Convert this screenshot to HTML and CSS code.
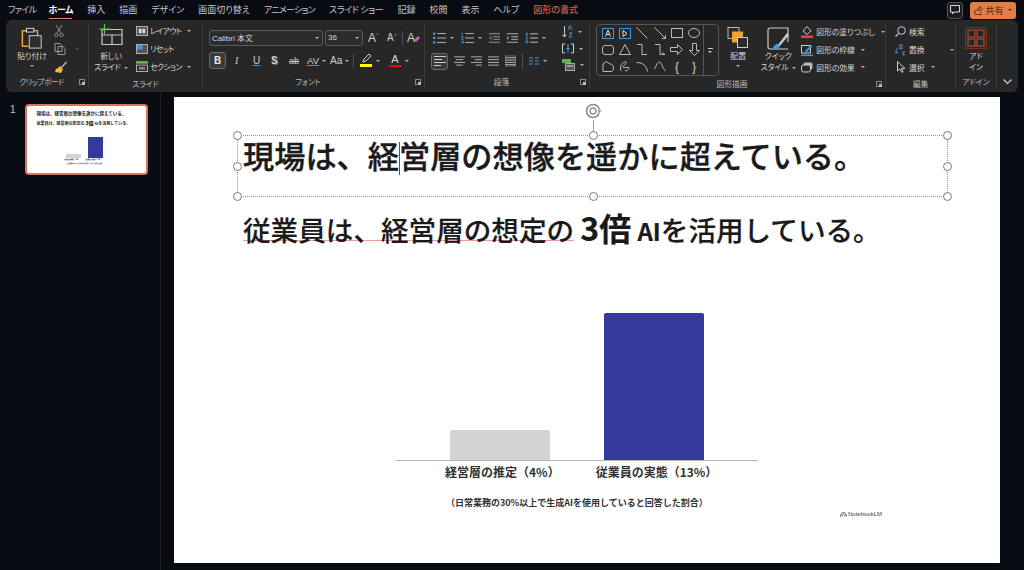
FILE: index.html
```html
<!DOCTYPE html>
<html lang="ja">
<head>
<meta charset="utf-8">
<title>PowerPoint</title>
<link rel="stylesheet" href="styles.css">
</head>
<body>
<div class="app">
  <header class="tabbar">
    <nav class="tabs">
      <span class="tab kana">ファイル</span><span class="tab active">ホーム</span><span class="tab">挿入</span><span class="tab">描画</span><span class="tab">デザイン</span><span class="tab">画面切り替え</span><span class="tab kana">アニメーション</span><span class="tab kana-soft">スライド ショー</span><span class="tab">記録</span><span class="tab">校閲</span><span class="tab">表示</span><span class="tab">ヘルプ</span><span class="tab context">図形の書式</span>
    </nav>
    <div class="tab-actions">
      <span class="comment-btn"><svg width="10" height="10" viewBox="0 0 10 10"><path d="M.5.5h9v6.500H4L2.500 9V7H.5z" fill="none" stroke="#ddd"/></svg></span>
      <span class="share-btn"><svg width="9" height="9" viewBox="0 0 9 9"><path d="M1 4v4.500h6V6M3 5c0-2 1-3 3-3V.5L8.500 3 6 5V3.800C4.500 3.800 3.500 4 3 5z" fill="none" stroke="#5a2a10" stroke-width=".9"/></svg>共有<i class="chev dark"></i></span>
    </div>
  </header>

  <section class="ribbon">
    <div class="group g-clip">
      <div class="body">
        <div class="big paste">
          <svg width="22" height="22" viewBox="0 0 24 24"><path d="M6 4H1.500v17H8" fill="none" stroke="#eea83c" stroke-width="1.600"/><path d="M14 4h4v5" fill="none" stroke="#eea83c" stroke-width="1.500"/><rect x="6" y="1.500" width="8" height="4" fill="none" stroke="#ddd"/><rect x="9" y="9.500" width="13" height="13.500" fill="#2d2d2d" stroke="#ddd"/></svg>
          <span>貼り付け</span><i class="chev"></i>
        </div>
        <div class="clip-tools">
          <svg width="10" height="12" viewBox="0 0 10 12"><path d="M2 0l5 8M8 0L3 8" stroke="#888" fill="none"/><circle cx="2.500" cy="10" r="1.700" fill="none" stroke="#888"/><circle cx="7.500" cy="10" r="1.700" fill="none" stroke="#888"/></svg>
          <span class="copy-row"><svg width="13" height="12" viewBox="0 0 13 12"><path d="M1 .5h5l2 2v6H1z M4 3.500h5l2 2v6H4z" fill="#262626" stroke="#999"/></svg><i class="chev dim"></i></span>
          <svg width="13" height="13" viewBox="0 0 13 13"><path d="M7 6l5-5.500 1 1L8 7z" fill="#bbb"/><path d="M6 5l3 3-2 4-6-1 1-3 2-1z" fill="#f0ba3e"/></svg>
        </div>
      </div>
      <div class="label with-launcher tight">クリップボード<i class="launcher"></i></div>
    </div>

    <div class="group g-slide">
      <div class="body">
        <div class="big">
          <svg width="24" height="21" viewBox="0 0 24 21"><path d="M3 5.500h20v15H3zM3 11h20M13 11v9.500" fill="none" stroke="#c8c8c8" stroke-width="1.200"/><path d="M5.500 0v10M0 5h11" stroke="#62c552" stroke-width="1.200"/></svg>
          <span>新しい</span><span>スライド<i class="chev"></i></span>
        </div>
        <div class="stack">
          <div class="row"><svg width="12" height="10" viewBox="0 0 13 11"><rect x=".5" y=".5" width="12" height="10" fill="#555" stroke="#bbb"/><path d="M3 3h3v5H3zM7 3h3v5H7z" fill="#ddd"/></svg>レイアウト<i class="chev"></i></div>
          <div class="row"><svg width="12" height="10" viewBox="0 0 13 11"><rect x=".5" y=".5" width="12" height="10" fill="#555" stroke="#bbb"/><path d="M1 1h6v5H1z" fill="#3b9ae1"/></svg>リセット</div>
          <div class="row"><svg width="12" height="11" viewBox="0 0 13 12"><rect x="0" y="0" width="13" height="3" fill="#62b04f"/><rect x=".5" y="4.500" width="12" height="7" fill="none" stroke="#bbb"/><rect x="3" y="6.500" width="7" height="3" fill="#888"/></svg>セクション<i class="chev"></i></div>
        </div>
      </div>
      <div class="label">スライド</div>
    </div>

    <div class="group g-font">
      <div class="body column">
        <div class="font-row">
          <span class="select font-name">Calibri 本文<i class="chev"></i></span>
          <span class="select font-size">36<i class="chev"></i></span>
          <span class="glyph big-a">A<sup>^</sup></span>
          <span class="glyph small-a">A<sup>˅</sup></span>
          <span class="vline"></span>
          <span class="glyph clear-a">A<svg width="8" height="8" viewBox="0 0 8 8"><path d="M1 5l4-4 2 2-4 4z" fill="#d060b0"/></svg></span>
        </div>
        <div class="font-row second">
          <span class="toggle b">B</span>
          <span class="glyph italic">I</span>
          <span class="glyph under">U</span>
          <span class="glyph shadow">S</span>
          <span class="glyph strike">ab</span>
          <span class="glyph spacing">AV<i class="chev"></i></span>
          <span class="glyph case">Aa<i class="chev"></i></span>
          <span class="vline"></span>
          <span class="color-btn"><svg width="13" height="9" viewBox="0 0 13 9"><path d="M3 8l1-3 5-5 2 2-5 5z" fill="none" stroke="#ccc"/></svg><b class="bar yellow"></b></span><i class="chev"></i>
          <span class="color-btn letter">A<b class="bar red"></b></span><i class="chev"></i>
        </div>
      </div>
      <div class="label with-launcher">フォント<i class="launcher"></i></div>
    </div>

    <div class="group g-para">
      <div class="body">
        <div class="para-main">
          <div class="para-row">
            <span class="ico"><svg width="13" height="12" viewBox="0 0 14 12"><path d="M0 0h2.500v2.500H0zM0 4.700h2.500v2.500H0zM0 9.500h2.500V12H0z" fill="#3b9ae1"/><path d="M4.500 1.200H14M4.500 6H14M4.500 10.800H14" stroke="#bbb"/></svg><i class="chev"></i></span>
            <span class="ico"><svg width="13" height="12" viewBox="0 0 14 12"><path d="M1 0v3M.5 4.500h2L.5 7.500h2M.5 9.500h2v2h-2" fill="none" stroke="#3b9ae1"/><path d="M4.500 1.200H14M4.500 6H14M4.500 10.800H14" stroke="#bbb"/></svg><i class="chev"></i></span>
            <span class="ico"><svg width="11" height="12" viewBox="0 0 13 12"><path d="M0 1h13M5 4.500h8M5 7.500h8M0 11h13" stroke="#aaa"/><path d="M3 3.500L0 6l3 2.500z" fill="#777"/></svg></span>
            <span class="ico"><svg width="11" height="12" viewBox="0 0 13 12"><path d="M0 1h13M5 4.500h8M5 7.500h8M0 11h13" stroke="#ccc"/><path d="M0 3.500L3 6 0 8.500z" fill="#3b9ae1"/></svg></span>
            <span class="ico"><svg width="13" height="12" viewBox="0 0 14 12"><path d="M2 1v10M.5 2.500L2 .5l1.500 2M.5 9.500L2 11.500l1.500-2" fill="none" stroke="#3b9ae1"/><path d="M5.500 1.500H14M5.500 6H14M5.500 10.500H14" stroke="#ccc"/></svg><i class="chev"></i></span>
          </div>
          <div class="para-row second">
            <span class="toggle align"><svg width="12" height="10" viewBox="0 0 12 10"><path d="M0 .5h12M0 3.500h8M0 6.500h12M0 9.500h7" stroke="#ccc"/></svg></span>
            <span class="ico"><svg width="11" height="10" viewBox="0 0 12 10"><path d="M0 .5h12M2 3.500h8M0 6.500h12M2.500 9.500h7" stroke="#bbb"/></svg></span>
            <span class="ico"><svg width="11" height="10" viewBox="0 0 12 10"><path d="M0 .5h12M4 3.500h8M0 6.500h12M5 9.500h7" stroke="#bbb"/></svg></span>
            <span class="ico"><svg width="11" height="10" viewBox="0 0 12 10"><path d="M0 .5h12M0 3.500h12M0 6.500h12M0 9.500h12" stroke="#bbb"/></svg></span>
            <span class="ico"><svg width="11" height="12" viewBox="0 0 12 12"><path d="M0 2.500h12M0 5h12M0 7.500h12M0 10h12" stroke="#ccc"/><path d="M.5 0v12M11.500 0v12M0 .5h12M0 11.500h12" stroke="#3b9ae1" stroke-width=".8"/></svg></span>
            <span class="vline"></span>
            <span class="ico"><svg width="10" height="8" viewBox="0 0 10 8"><path d="M0 1h4M0 4h4M0 7h4M6 1h4M6 4h4M6 7h4" stroke="#3b9ae1"/></svg><i class="chev"></i></span>
          </div>
        </div>
        <div class="para-side">
          <span class="ico"><svg width="11" height="13" viewBox="0 0 11 13"><path d="M2.500 1v11M.5 9.500l2 2.500 2-2.500" fill="none" stroke="#ccc"/><path d="M7 5V1h1.500L10 5M7 8h3l-3 4h3" fill="none" stroke="#3b9ae1"/></svg><i class="chev"></i></span>
          <span class="ico"><svg width="12" height="11" viewBox="0 0 12 11"><path d="M3 1H.5v9H3M9 1h2.500v9H9" fill="none" stroke="#ccc"/><path d="M6 1v9M4 5.500h4" stroke="#3b9ae1"/></svg><i class="chev"></i></span>
          <span class="ico"><svg width="13" height="12" viewBox="0 0 13 12"><path d="M0 0h9v4H0z" fill="#62b04f"/><rect x="3.500" y="4.500" width="9" height="7" fill="#555" stroke="#aaa"/><path d="M5 7h6" stroke="#ddd"/></svg><i class="chev"></i></span>
        </div>
      </div>
      <div class="label with-launcher">段落<i class="launcher"></i></div>
    </div>

    <div class="group g-draw">
      <div class="body">
        <div class="gallery">
          <div class="shapes">
            <svg width="12" height="11" viewBox="0 0 12 11"><rect x=".5" y=".5" width="11" height="10" fill="none" stroke="#3b9ae1"/><path d="M3.500 8.500L6 2l2.500 6.500M4.500 6.500h3" fill="none" stroke="#ddd"/></svg>
            <svg width="12" height="11" viewBox="0 0 12 11"><rect x=".5" y=".5" width="11" height="10" fill="none" stroke="#3b9ae1"/><path d="M4 2.500L8 5.500 4 8.500z" fill="none" stroke="#ddd"/></svg>
            <svg width="12" height="12" viewBox="0 0 12 12"><path d="M.5.500l11 11" stroke="#bbb"/></svg>
            <svg width="12" height="12" viewBox="0 0 12 12"><path d="M.5.500l11 11M8 11.500h3.500V8" fill="none" stroke="#bbb"/></svg>
            <svg width="12" height="10" viewBox="0 0 12 10"><rect x=".5" y=".5" width="11" height="9" fill="none" stroke="#bbb"/></svg>
            <svg width="12" height="10" viewBox="0 0 12 10"><ellipse cx="6" cy="5" rx="5.500" ry="4.500" fill="none" stroke="#bbb"/></svg>
            <svg width="12" height="10" viewBox="0 0 12 10"><rect x=".5" y=".5" width="11" height="9" rx="2.500" fill="none" stroke="#bbb"/></svg>
            <svg width="12" height="11" viewBox="0 0 12 11"><path d="M6 .5l5.500 10H.5z" fill="none" stroke="#bbb"/></svg>
            <svg width="12" height="11" viewBox="0 0 12 11"><path d="M1 .5h5v10h5" fill="none" stroke="#bbb"/></svg>
            <svg width="12" height="11" viewBox="0 0 12 11"><path d="M1 .5h5v10h3M8 8.500l3 2-3 .5" fill="none" stroke="#bbb"/></svg>
            <svg width="13" height="11" viewBox="0 0 13 11"><path d="M.5 3.500h7V.5l5 5-5 5v-3h-7z" fill="none" stroke="#bbb"/></svg>
            <svg width="11" height="13" viewBox="0 0 11 13"><path d="M3.500.5h4v7h3l-5 5-5-5h3z" fill="none" stroke="#bbb"/></svg>
            <svg width="12" height="11" viewBox="0 0 12 11"><path d="M1 10.500V3l3-2.500 4 2.500c2.500 0 3.500 2 3.500 4 0 2-1 3.500-2.500 3.500z" fill="none" stroke="#bbb"/></svg>
            <svg width="12" height="11" viewBox="0 0 12 11"><path d="M2 10C0 5 4 0 7 1c2 1-3 3-3 5s6-1 6 1-3 3-4 3" fill="none" stroke="#bbb"/></svg>
            <svg width="12" height="11" viewBox="0 0 12 11"><path d="M.5 1.500c6 0 10 3 11 9" fill="none" stroke="#bbb"/></svg>
            <svg width="12" height="11" viewBox="0 0 12 11"><path d="M.5 8c2-4 3-7 5-7s3 6 6 9" fill="none" stroke="#bbb"/></svg>
            <span class="brace">{</span>
            <span class="brace">}</span>
          </div>
          <div class="gallery-more"><span class="more-icon"></span></div>
        </div>
        <div class="big arrange">
          <svg width="22" height="21" viewBox="0 0 22 21"><rect x="1" y=".5" width="11" height="11" fill="#2b2b2b" stroke="#bbb"/><rect x="5" y="4.500" width="11" height="11" fill="#eda531"/><rect x="10.500" y="10.500" width="10" height="10" fill="#2b2b2b" stroke="#ccc"/></svg>
          <span>配置</span><i class="chev"></i>
        </div>
        <div class="big quick">
          <svg width="23" height="23" viewBox="0 0 23 23"><path d="M3 1h18v14M21 22H3a2 2 0 0 1-2-2V3a2 2 0 0 1 2-2" fill="none" stroke="#ccc" stroke-width="1.200"/><path d="M10 19l10-13 2 2-10 12z" fill="#c8c8c8"/><path d="M6 22c0-3 2-5 5-5l2 2c0 2-3 4-7 3z" fill="#3b9ae1"/></svg>
          <span>クイック</span><span>スタイル<i class="chev"></i></span>
        </div>
        <div class="stack shape-fmt">
          <div class="row"><svg width="12" height="12" viewBox="0 0 12 12"><path d="M6 .5L10 5 6 8.500 2 5z" fill="none" stroke="#ccc"/><rect x="0" y="9.500" width="12" height="2.500" fill="#d9473c"/></svg>図形の塗りつぶし<i class="chev"></i></div>
          <div class="row"><svg width="12" height="12" viewBox="0 0 12 12"><rect x=".5" y="1.500" width="9" height="7.500" fill="none" stroke="#ccc"/><path d="M4 7l6-6 1.500 1.500-6 6z" fill="#3b9ae1"/><rect x="0" y="10.500" width="12" height="1.500" fill="#3b9ae1"/></svg>図形の枠線<i class="chev"></i></div>
          <div class="row"><svg width="12" height="11" viewBox="0 0 12 11"><rect x="2.500" y=".5" width="9" height="7" rx="2" fill="#bbb"/><rect x=".5" y="3" width="9" height="7" rx="2" fill="#2b2b2b" stroke="#ccc"/></svg>図形の効果<i class="chev"></i></div>
        </div>
      </div>
      <div class="label with-launcher">図形描画<i class="launcher"></i></div>
    </div>

    <div class="group g-edit">
      <div class="body">
        <div class="stack">
          <div class="row"><svg width="11" height="11" viewBox="0 0 11 11"><circle cx="6.500" cy="4.500" r="3.800" fill="none" stroke="#ccc"/><path d="M3.700 7.300L.5 10.500" stroke="#ccc" stroke-width="1.200"/></svg>検索</div>
          <div class="row"><svg width="11" height="12" viewBox="0 0 11 12"><path d="M5 0h2v5H5z" fill="none" stroke="#b568c8" stroke-width=".9"/><path d="M3 4C1 5 .5 7 1.500 9M.5 7.500l1 1.500 1.500-1" fill="none" stroke="#3b9ae1"/><path d="M10 8H8v3h2" fill="none" stroke="#3b9ae1"/></svg>置換<i class="chev wide"></i></div>
          <div class="row"><svg width="11" height="12" viewBox="0 0 11 12"><path d="M2.500.5v9.500l2.500-2 2 3.500 1-.6L6.500 7.500H10z" fill="none" stroke="#ccc"/></svg>選択<i class="chev"></i></div>
        </div>
      </div>
      <div class="label">編集</div>
    </div>

    <div class="group g-addin">
      <div class="body">
        <div class="big">
          <svg width="22" height="22" viewBox="0 0 22 22"><rect x=".5" y=".5" width="21" height="21" fill="none" stroke="#7f2f1c"/><rect x="3" y="3" width="7" height="7" fill="none" stroke="#b8462a" stroke-width="1.200"/><rect x="12" y="3" width="7" height="7" fill="none" stroke="#b8462a" stroke-width="1.200"/><rect x="3" y="12" width="7" height="7" fill="none" stroke="#b8462a" stroke-width="1.200"/><rect x="12" y="12" width="7" height="7" fill="none" stroke="#b8462a" stroke-width="1.200"/></svg>
          <span>アド</span><span>イン</span>
        </div>
      </div>
      <div class="label">アドイン</div>
    </div>

    <div class="collapse"><svg width="9" height="6" viewBox="0 0 9 6"><path d="M.5.5l4 4 4-4" fill="none" stroke="#ccc" stroke-width="1.200"/></svg></div>
  </section>

  <main class="workspace">
    <aside class="thumbs">
      <span class="thumb-no">1</span>
      <div class="thumb">
        <p class="t-title">現場は、経営層の想像を遥かに超えている。</p>
        <p class="t-sub">従業員は、経営層の想定の <b>3倍</b> AIを活用している。</p>
        <div class="t-chart">
          <span class="t-bar t-gray"></span>
          <span class="t-bar t-blue"></span>
        </div>
        <div class="t-labels"><span>経営層の推定（4%）</span><span>従業員の実態（13%）</span></div>
        <p class="t-cap">（日常業務の30%以上で生成AIを使用していると回答した割合）</p>
      </div>
    </aside>
    <div class="stage">
      <article class="slide">
        <div class="title-box">
          <h1 class="title">現場は、経<span class="caret"></span>営層の想像を遥かに超えている。</h1>
          <span class="stem"></span>
          <svg class="rotate" width="20" height="20" viewBox="0 0 20 20"><circle cx="9" cy="10" r="6.500" fill="none" stroke="#8a8a8a" stroke-width="1.600"/><circle cx="9" cy="10" r="3" fill="none" stroke="#8a8a8a" stroke-width="1.300"/><path d="M13 9l5 0-2.500 3.500z" fill="#8a8a8a" stroke="#fff" stroke-width=".6"/></svg>
          <i class="h h-tl"></i><i class="h h-tc"></i><i class="h h-tr"></i>
          <i class="h h-ml"></i><i class="h h-mr"></i>
          <i class="h h-bl"></i><i class="h h-bc"></i><i class="h h-br"></i>
        </div>
        <p class="subtitle"><span class="squiggle">従業員は、経営層の想定の</span> <b class="big-num">3倍</b> <span class="ai">AI</span>を活用している。</p>
        <div class="chart">
          <div class="bars">
            <span class="bar-col gray"></span>
            <span class="bar-col blue"></span>
          </div>
          <div class="chart-labels"><span>経営層の推定（4%）</span><span>従業員の実態（13%）</span></div>
        </div>
        <p class="caption">（日常業務の30%以上で生成AIを使用していると回答した割合）</p>
        <p class="brand"><svg width="7" height="5" viewBox="0 0 7 5"><path d="M.5 4.500C.5 2 2 .5 3.500 .5S6.500 2 6.500 4.500M2 4.500C2 3 2.700 2.500 3.500 2.500S5 3 5 4.500" fill="none" stroke="#333" stroke-width=".8"/></svg>NotebookLM</p>
      </article>
    </div>
  </main>
</div>
</body>
</html>
```

FILE: styles.css
```css
* { box-sizing: border-box; }
html, body { margin: 0; height: 100%; }
body {
  background: #090b12;
  color: #d6d6d6;
  font-family: "Noto Sans CJK JP", "Noto Sans", sans-serif;
  overflow: hidden;
}
p, h1 { margin: 0; }
i { font-style: normal; }
.app { width: 1024px; height: 570px; display: flex; flex-direction: column; }

/* title bar */
.tabbar { height: 20px; display: flex; justify-content: space-between; align-items: center; padding: 0 8px; }
.tabs { display: flex; gap: 14px; font-size: 9px; font-feature-settings: "palt"; color: #c9c9c9; }
.tab { position: relative; line-height: 20px; white-space: nowrap; }
.tab.kana { letter-spacing: -.7px; }
.tab.kana-soft { letter-spacing: -.3px; }
.tab.active { color: #fff; font-weight: 700; letter-spacing: -.3px; margin-left: -2px; }
.tab.active::after { content: ""; position: absolute; left: 1px; right: 1px; bottom: 1px; height: 1.500px; background: #e58a5c; }
.tab.context { color: #c8674f; font-weight: 500; }
.tab-actions { display: flex; gap: 7px; align-items: center; }
.comment-btn { width: 16px; height: 17px; border: 1px solid #555; border-radius: 3px; display: flex; align-items: center; justify-content: center; background: #1c1c1c; }
.share-btn { width: 46px; height: 17px; background: #e27f45; border-radius: 3px; color: #5a2a10; font-size: 9px; display: flex; align-items: center; justify-content: center; gap: 2px; }

/* chevrons */
.chev { display: inline-block; width: 0; height: 0; border-left: 2.500px solid transparent; border-right: 2.500px solid transparent; border-top: 2.500px solid #b5b5b5; margin-left: 3px; vertical-align: middle; }
.chev.dark { border-top-color: #5a2a10; margin-left: 2px; }
.chev.dim { border-top-color: #555; margin-left: 8px; }
.chev.wide { margin-left: 22px; }

/* ribbon */
.ribbon { margin: 0 6px; width: 1012px; height: 72px; background: #272727; border-radius: 6px; display: flex; font-size: 7.8px; font-feature-settings: "palt"; }
.group { position: relative; display: flex; flex-direction: column; border-right: 1px solid #3c3c3c; margin: 4px 0; }
.body { height: 52px; display: flex; }
.body.column { flex-direction: column; }
.label { flex: 1; text-align: center; font-size: 7.8px; line-height: 12px; color: #bdbdbd; position: relative; margin-top: 2px; }
.label.with-launcher { padding-right: 11px; }
.label.tight { letter-spacing: -.5px; }
.launcher { position: absolute; right: 3px; top: 3px; width: 6px; height: 6px; border: 1px solid #888; }
.launcher::after { content: ""; position: absolute; right: -1px; bottom: -1px; width: 3px; height: 3px; background: #bbb; }
.g-clip { width: 83px; }
.g-slide { width: 114px; }
.g-font { width: 222px; }
.g-para { width: 165px; }
.g-draw { width: 296px; }
.g-edit { width: 70px; }
.g-addin { width: 41px; }
.big { display: flex; flex-direction: column; align-items: center; line-height: 11px; white-space: nowrap; }
.big svg { margin-bottom: 4px; }
.big .chev { margin-left: 3px; }
.big > .chev { margin: 4px 0 0; }

.paste { width: 36px; margin: 3px 0 0 8px; }
.paste svg { margin-bottom: 1px; }
.clip-tools { width: 26px; margin: 1px 0 0 4px; display: flex; flex-direction: column; gap: 6px; }
.copy-row { display: flex; align-items: center; }
.g-slide .big { width: 42px; margin: 0 0 0 1px; }
.g-slide .big svg { margin-bottom: 5px; }
.stack { display: flex; flex-direction: column; margin-top: -1px; }
.row { height: 18px; display: flex; align-items: center; gap: 3px; white-space: nowrap; color: #d6d6d6; }
.g-slide .stack { margin: -2.500px 0 0 4px; }
.g-slide .row { height: 19px; letter-spacing: -.5px; gap: 2px; }

/* font group */
.font-row { display: flex; align-items: center; height: 17px; margin: 5px 0 0 6px; }
.font-row.second { margin-top: 5px; height: 19px; }
.select { height: 16px; border: 1px solid #5a5a5a; border-radius: 3px; font-size: 8px; display: flex; align-items: center; justify-content: space-between; padding: 0 3px 0 2px; background: #2c2c2c; font-family: "Liberation Sans", "Noto Sans CJK JP", sans-serif; }
.font-name { width: 114px; }
.font-size { width: 38px; margin-left: 2px; }
.glyph { color: #cfcfcf; font-family: "Liberation Sans", sans-serif; font-size: 11px; display: inline-flex; align-items: center; }
.glyph sup { font-size: 6px; color: #3b9ae1; margin-top: -5px; }
.big-a { margin-left: 5px; font-size: 12px; width: 15px; }
.small-a { margin-left: 4px; font-size: 10px; width: 13px; }
.vline { width: 1px; height: 14px; background: #505050; }
.font-row .vline { margin: 0 3px 0 2px; }
.clear-a { margin-left: 1px; font-size: 12px; }
.clear-a svg { margin: 3px 0 0 -2px; }
.toggle { display: flex; align-items: center; justify-content: center; border: 1px solid #6a6a6a; border-radius: 3px; background: #3a3a3a; }
.toggle.b { width: 17px; height: 17px; font-family: "Liberation Sans", sans-serif; font-weight: 700; font-size: 10px; color: #e8e8e8; }
.italic { font-style: italic; margin-left: 9px; width: 9px; font-size: 10px; font-family: "Liberation Serif", serif; }
.under { margin-left: 9px; text-decoration: underline; text-decoration-color: #3b9ae1; width: 9px; font-size: 10px; }
.shadow { margin-left: 9px; width: 9px; font-weight: 700; text-shadow: 1px 1px 0 #666; font-size: 10px; }
.strike { margin-left: 9px; width: 10px; font-size: 9px; text-decoration: line-through; }
.spacing { margin-left: 8px; width: 22px; font-size: 9.500px; text-decoration: underline; text-decoration-color: #3b9ae1; }
.case { margin-left: 1px; width: 23px; font-size: 10px; }
.font-row.second .vline { margin: 0 5px 0 0; }
.color-btn { display: inline-flex; flex-direction: column; align-items: center; width: 14px; }
.color-btn.letter { margin-left: 8px; font-family: "Liberation Sans", sans-serif; font-size: 11px; line-height: 10px; }
.bar { display: block; width: 12px; height: 2.500px; margin-top: 1px; }
.yellow { background: #ffff00; }
.red { background: #ff0000; }

/* paragraph */
.para-main { display: flex; flex-direction: column; width: 129px; margin: 4px 0 0 6px; }
.para-row { display: flex; align-items: center; height: 20px; gap: 6px; }
.para-row.second { margin-top: 3px; gap: 6px; }
.ico { display: inline-flex; align-items: center; }
.para-row .chev { margin-left: 4px; }
.para-row:first-child { padding-left: 2px; gap: 7px; }
.toggle.align { width: 17px; height: 17px; }
.para-row .vline { height: 16px; }
.para-side { display: flex; flex-direction: column; gap: 5px; margin-top: 1px; margin-left: 2px; }
.para-side .chev { margin-left: 5px; }

/* drawing */
.gallery { width: 123px; height: 52px; margin: 0 0 0 6px; border: 1px solid #555; border-radius: 4px; display: flex; }
.shapes { flex: 1; display: grid; grid-template-columns: repeat(6, 17.300px); grid-template-rows: repeat(3, 1fr); justify-items: center; align-items: center; padding: 0 0 0 2px; }
.brace { color: #c4c4c4; font-size: 13px; line-height: 1; font-family: "Liberation Sans", sans-serif; }
.gallery-more { width: 17px; border-left: 1px solid #555; display: flex; align-items: center; justify-content: center; }
.more-icon { width: 5px; height: 4px; border-top: 1px solid #ccc; position: relative; }
.more-icon::after { content: ""; position: absolute; left: 0; top: 1.500px; border-left: 2.500px solid transparent; border-right: 2.500px solid transparent; border-top: 2.500px solid #ccc; }
.arrange { width: 34px; margin: 3px 0 0 3px; }
.arrange svg { margin-bottom: 2px; }
.quick { width: 42px; margin: 3px 0 0 4px; }
.quick svg { margin-bottom: 0; }
.shape-fmt { margin-left: 3px; }

/* edit, add-ins */
.g-edit .stack { margin-left: 9px; }
.g-addin .big { width: 100%; margin-top: 3px; }
.g-addin .big svg { margin-bottom: 1px; }
.collapse { flex: 1; display: flex; align-items: flex-end; justify-content: center; padding-bottom: 7px; }

/* workspace */
.workspace { flex: 1; display: flex; min-height: 0; }
.thumbs { width: 161px; border-right: 1px solid #1e2028; padding: 12px 0 0 10px; display: flex; gap: 9px; align-items: flex-start; }
.thumb-no { font-size: 10px; color: #c4c4c4; line-height: 11px; font-family: "Liberation Sans", sans-serif; }
.thumb { width: 123px; height: 71px; flex: none; background: #fff; border: 2px solid #d9735f; border-radius: 4px; color: #222; padding: 4px 0 0 10px; }
.t-title { font-size: 4.500px; font-weight: 700; line-height: 6px; white-space: nowrap; }
.t-sub { font-size: 4px; font-weight: 700; line-height: 6px; margin-top: 4px; white-space: nowrap; }
.t-sub b { font-size: 5px; }
.t-chart { height: 22px; margin: 10px 0 0 29px; width: 37px; display: flex; align-items: flex-end; justify-content: space-between; }
.t-bar { width: 15px; display: block; }
.t-gray { height: 4px; background: #d4d4d4; }
.t-blue { height: 21px; background: #35399b; }
.t-labels { display: flex; gap: 6px; margin-left: 28px; font-size: 1.600px; font-weight: 700; line-height: 3px; white-space: nowrap; }
.t-cap { font-size: 1.300px; font-weight: 700; margin: 1px 0 0 29px; line-height: 3px; white-space: nowrap; }

.stage { flex: 1; padding: 5px 24px 7px 13px; min-width: 0; }
.slide { width: 826px; height: 466px; background: #fff; color: #1a1a1a; padding: 38px 0 0 63px; position: relative; }

.title-box { position: relative; width: 711px; height: 62px; border: 1px dotted #8f8f8f; padding: 0 0 0 5px; }
.title { font-size: 31.200px; line-height: 38px; font-weight: 500; -webkit-text-stroke: .35px #1a1a1a; white-space: nowrap; }
.caret { display: inline-block; width: 1px; height: 33px; margin: 0 -1px 0 0; background: #555; vertical-align: -7px; }
.h { position: absolute; width: 9px; height: 9px; border: 1px solid #7a7a7a; border-radius: 50%; background: #fff; }
.h-tl, .h-ml, .h-bl { left: -5px; }
.h-tc, .h-bc { left: 351px; }
.h-tr, .h-mr, .h-br { right: -5px; }
.h-tl, .h-tc, .h-tr { top: -5px; }
.h-ml, .h-mr { top: 26px; }
.h-bl, .h-bc, .h-br { bottom: -5px; }
.stem { position: absolute; left: 355px; top: -16px; width: 1px; height: 12px; background: #9a9a9a; }
.rotate { position: absolute; left: 346px; top: -35px; }

.subtitle { margin: 10px 0 0 6px; font-size: 27.600px; line-height: 40px; font-weight: 500; -webkit-text-stroke: .2px #1a1a1a; white-space: nowrap; }
.squiggle { background: linear-gradient(#f09a9a, #f09a9a) no-repeat 0 31px / 100% 1px; }
.big-num { font-size: 32px; font-weight: 700; }
.ai { font-size: 24px; font-weight: 700; }
.chart { margin: 62px 0 0 159px; width: 362px; }
.bars { height: 148px; display: flex; align-items: flex-end; gap: 54px; padding-left: 54px; border-bottom: 1.500px solid #b4b4b4; }
.bar-col { width: 100px; display: block; border-radius: 2px 2px 0 0; }
.gray { height: 30px; background: #d3d3d3; }
.blue { height: 147px; background: #35399b; }
.chart-labels { display: flex; gap: 36px; padding-left: 49px; font-size: 12px; font-weight: 700; line-height: 22px; white-space: nowrap; color: #333; }
.caption { margin: 13px 0 0 209px; font-size: 9px; font-weight: 700; line-height: 14px; color: #333; white-space: nowrap; }
.brand { position: absolute; right: 118px; bottom: 45px; display: flex; align-items: center; gap: 1px; font-family: "Liberation Sans", sans-serif; font-size: 6px; line-height: 8px; color: #444; }
```
